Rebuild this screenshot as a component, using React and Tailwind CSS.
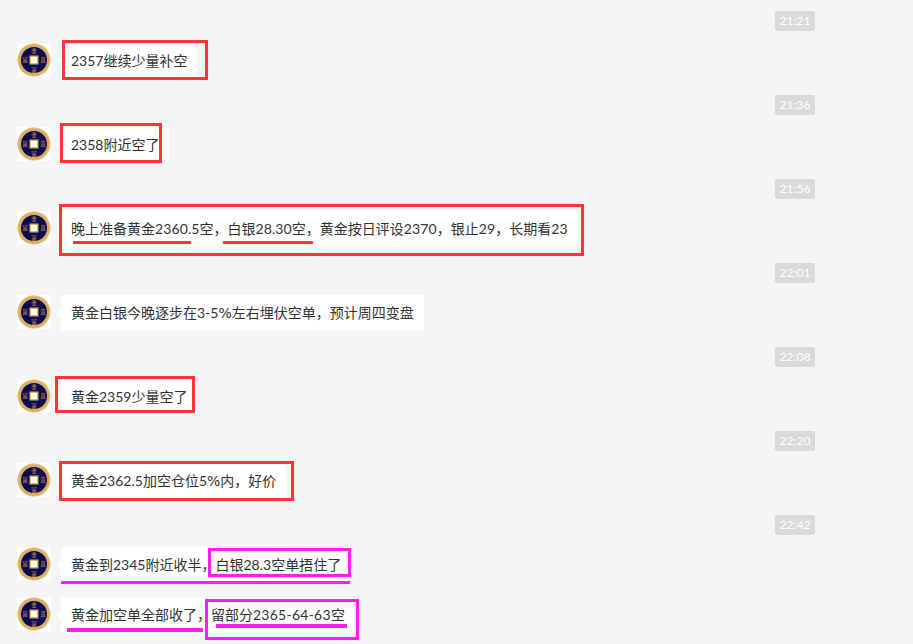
const Avatar = () => (
  <div className="w-[34px] h-[34px] shrink-0 bg-white">
    <svg width="34" height="34" viewBox="0 0 34 34">
      <circle cx="17" cy="17" r="16.5" fill="#dcae62" />
      <circle cx="17" cy="17" r="16" fill="none" stroke="#efd9a6" strokeWidth="1" strokeDasharray="1.5 1.5" />
      <circle cx="17" cy="17" r="13" fill="#0c0a50" />
      <rect x="12.5" y="12.5" width="9" height="9" fill="#e0b060" />
      <rect x="14" y="14" width="6" height="6" fill="#fff" />
      <g fill="#d9a850" fontSize="5.5" textAnchor="middle" fontFamily="'Noto Sans CJK SC', sans-serif">
        <text x="17" y="9.5">金</text>
        <text x="17" y="28.5">富</text>
        <text x="8" y="19">富</text>
        <text x="26" y="19">贵</text>
      </g>
    </svg>
  </div>
);

const Time = ({ children }) => (
  <div className="self-end mr-[98px] w-[40px] h-[20px] rounded-[2px] bg-[#dadada] text-white text-[12px] leading-[20px] text-center">
    {children}
  </div>
);

const Message = ({ text, className = "", children }) => (
  <div className={`relative flex items-start ${className}`}>
    <Avatar />
    <div className="relative ml-[10px] h-[36px] rounded-[4px] bg-white px-[10px] text-[14px] leading-[36px] text-[#333333] whitespace-nowrap">
      <span className="absolute left-[-5px] top-[13px] w-0 h-0 border-y-[5px] border-y-transparent border-r-[5px] border-r-white" />
      {text}
    </div>
    {children}
  </div>
);

const Group = ({ time, children }) => (
  <div className="flex flex-col mb-[16px]">
    <Time>{time}</Time>
    {children}
  </div>
);

const Pct = () => <span className="font-['DejaVu_Sans']">%</span>;
const Num = ({ children }) => <span className="tracking-[0.1px]">{children}</span>;
const Wide = ({ children }) => <span className="tracking-[0.25px]">{children}</span>;

const RedBox = ({ className }) => <div className={`absolute border-[3px] border-[#ff3535] ${className}`} />;
const PinkBox = ({ className }) => <div className={`absolute border-[3px] border-[#f81ff0] ${className}`} />;
const Line = ({ className }) => <div className={`absolute ${className}`} />;

export default function App() {
  return (
    <div
      className="h-[644px] overflow-hidden bg-[#f5f5f5] pt-[11px] pl-[17px] flex flex-col"
      style={{ fontFamily: "Lato, 'Noto Sans CJK SC', sans-serif" }}
    >
      <Group time="21:21">
        <Message className="mt-[12px]" text="2357继续少量补空">
          <RedBox className="left-[45px] top-[-3px] w-[146px] h-[40px]" />
        </Message>
      </Group>
      <Group time="21:36">
        <Message className="mt-[12px]" text="2358附近空了">
          <RedBox className="left-[43px] top-[-4px] w-[102px] h-[40px]" />
        </Message>
      </Group>
      <Group time="21:56">
        <Message
          className="mt-[12px]"
          text={<>晚上准备黄金<Num>2360.5</Num>空，白银<Num>28.30</Num>空，黄金按日评设<Num>2370</Num>，银止<Num>29</Num>，长期看<Num>23</Num></>}
        >
          <RedBox className="left-[42px] top-[-7px] w-[525px] h-[52px]" />
          <Line className="left-[56px] top-[30px] w-[118px] h-[3px] bg-[#ff3535]" />
          <Line className="left-[206px] top-[30px] w-[90px] h-[3px] bg-[#ff3535]" />
        </Message>
      </Group>
      <Group time="22:01">
        <Message className="mt-[12px]" text={<>黄金白银今晚逐步在3-5<Pct />左右埋伏空单，预计周四变盘</>} />
      </Group>
      <Group time="22:08">
        <Message className="mt-[12px]" text="黄金2359少量空了">
          <RedBox className="left-[38px] top-[-3px] w-[140px] h-[37px]" />
        </Message>
      </Group>
      <Group time="22:20">
        <Message className="mt-[12px]" text={<>黄金2362.5加空仓位5<Pct />内，好价</>}>
          <RedBox className="left-[42px] top-[-2px] w-[235px] h-[40px]" />
        </Message>
      </Group>
      <Group time="22:42">
        <Message className="mt-[12px]" text="黄金到2345附近收半，白银28.3空单捂住了">
          <PinkBox className="left-[191px] top-[1px] w-[143px] h-[29px]" />
          <Line className="left-[44px] top-[34px] w-[289px] h-[3px] bg-[#f81ff0]" />
        </Message>
        <Message className="mt-[14px]" text={<>黄金加空单全部收了，留部分<Wide>2365-64-63</Wide>空</>}>
          <PinkBox className="left-[188px] top-[2px] w-[154px] h-[41px]" />
          <Line className="left-[199px] top-[27px] w-[131px] h-[4px] bg-[#f81ff0]" />
          <Line className="left-[50px] top-[31px] w-[136px] h-[4px] bg-[#f81ff0]" />
        </Message>
      </Group>
    </div>
  );
}
